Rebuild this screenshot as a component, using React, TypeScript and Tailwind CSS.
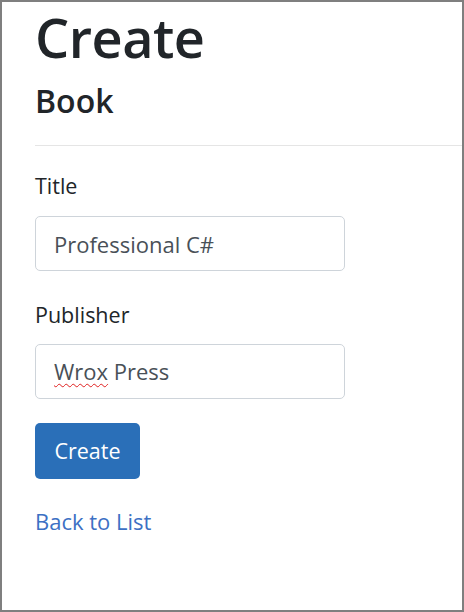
import React from 'react';

const App = () => {
  return (
    <div
      className="h-[612px] w-[464px] overflow-hidden border-2 border-[#7f7f7f] bg-white"
      style={{ fontFamily: '"Open Sans", "Noto Sans", sans-serif' }}
    >
      <div className="pl-[33px] pt-[2px]">
        <h1 className="text-[54px] font-semibold leading-[66px] tracking-[-0.5px] text-[#212529]">Create</h1>
        <h2 className="mt-[11px] text-[32px] font-semibold leading-[40px] text-[#212529]">Book</h2>
        <hr className="mt-[24px] border-t border-[#e5e5e5]" />

        <form className="mt-[26px] flex flex-col">
          <label className="text-[21.5px] leading-[28px] text-[#212529]">Title</label>
          <input
            defaultValue="Professional C#"
            className="mt-[16px] h-[55px] w-[310px] rounded-[5px] border border-[#ced4da] px-[18px] text-[22px] text-[#495057] outline-none"
          />
          <label className="mt-[30px] text-[21.5px] leading-[28px] text-[#212529]">Publisher</label>
          <div
            role="textbox"
            className="mt-[15px] flex h-[55px] w-[310px] items-center rounded-[5px] border border-[#ced4da] px-[18px] text-[22px] text-[#495057]"
          >
            <span className="underline decoration-[#e02020] decoration-wavy decoration-1 underline-offset-[3px]">Wrox</span>
            <span>&nbsp;Press</span>
          </div>
          <div className="mt-[24px]">
            <button
              type="button"
              className="h-[56px] w-[105px] rounded-[5px] bg-[#2a6fb8] text-[21.5px] text-white"
            >
              Create
            </button>
          </div>
        </form>

        <a href="#" className="mt-[28px] inline-block text-[22px] leading-[28px] text-[#3c70c4]">
          Back to List
        </a>
      </div>
    </div>
  );
};

export default App;
